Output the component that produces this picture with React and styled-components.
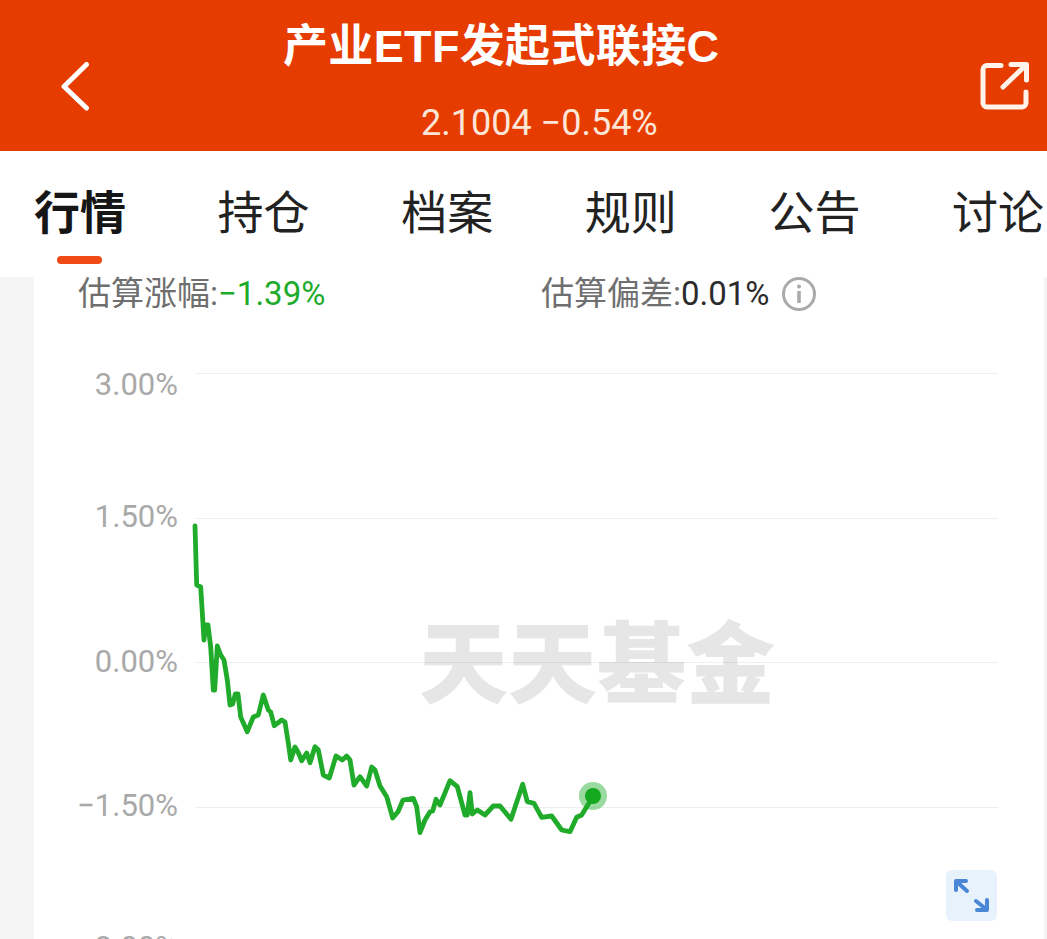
import React from "react";
import styled, { createGlobalStyle } from "styled-components";

const Global = createGlobalStyle`
  html, body { margin: 0; padding: 0; background: #f5f5f5; }
  body { font-family: Roboto, "Noto Sans CJK SC", sans-serif; }
  #root { width: 1047px; height: 939px; overflow: hidden; }
`;

const Page = styled.div`
  width: 1047px;
  height: 939px;
  overflow: hidden;
  display: flex;
  flex-direction: column;
`;

const Header = styled.header`
  height: 151px;
  flex: none;
  background: #e63c00;
  display: flex;
  align-items: flex-start;
  justify-content: space-between;
  padding: 62px 17px 0 60px;
  box-sizing: border-box;
  position: relative;
  color: #fff;
`;

const HeaderText = styled.div`
  position: absolute;
  inset: 0;
  display: flex;
  flex-direction: column;
`;

const Title = styled.h1`
  margin: 21px 0 0 283px;
  font: 700 45px/52px "Liberation Sans", "Noto Sans CJK SC", sans-serif;
  letter-spacing: 0.35px;
  white-space: nowrap;
`;

const Sub = styled.div`
  margin: 30px 0 0 421px;
  font: 400 36px/40px Roboto, "Noto Sans CJK SC", sans-serif;
  color: #fde6d8;
  white-space: nowrap;
`;

const Tabs = styled.nav`
  height: 126px;
  flex: none;
  background: #fff;
  position: relative;
  z-index: 2;
  display: flex;
  gap: 91.6px;
  padding: 31px 0 0 34px;
  box-sizing: border-box;
  overflow: hidden;
`;

const Tab = styled.div`
  position: relative;
  flex: none;
  font: ${(p) => (p.$active ? 700 : 400)} 46px/54px "Noto Sans CJK SC", sans-serif;
  color: ${(p) => (p.$active ? "#161616" : "#222")};
  white-space: nowrap;
`;

const Underline = styled.span`
  position: absolute;
  left: 23px;
  top: 74px;
  width: 45px;
  height: 8px;
  border-radius: 4px;
  background: #f04a16;
`;

const Body = styled.main`
  flex: 1;
  display: flex;
  padding: 0 3px 0 34px;
  min-height: 0;
`;

const Card = styled.section`
  flex: 1;
  background: #fff;
  position: relative;
  min-height: 0;
`;

const Stats = styled.div`
  display: grid;
  grid-template-columns: 463px auto;
  padding: 2px 0 0 44px;
  height: 32px;
  box-sizing: border-box;
  position: relative;
  z-index: 3;
`;

const Stat = styled.div`
  display: flex;
  align-items: center;
  height: 30px;
  font: 400 33px/30px Roboto, "Noto Sans CJK SC", sans-serif;
  color: #6f6f6f;
  white-space: nowrap;
`;

const StatValue = styled.span`
  color: ${(p) => p.$color};
`;

const InfoIcon = styled.svg`
  width: 36px;
  height: 36px;
  margin-left: 11px;
  flex: none;
`;

const Chart = styled.div`
  margin-top: 64px;
`;

const Row = styled.div`
  display: grid;
  grid-template-columns: 144px 803px;
  column-gap: 17px;
  height: 144.5px;
  align-items: start;
`;

const AxisLabel = styled.div`
  text-align: right;
  font: 400 31px/30px Roboto, sans-serif;
  color: #a9a9a9;
  margin-top: ${(p) => p.$top}px;
`;

const GridLine = styled.div`
  height: 1px;
  background: rgba(0, 0, 0, 0.065);
`;

const Watermark = styled.div`
  position: absolute;
  left: 385px;
  top: 331px;
  font: 900 89px/100px "Noto Sans CJK SC", sans-serif;
  color: #e6e6e6;
  white-space: nowrap;
  z-index: 0;
`;

const ChartRows = styled.div`
  position: relative;
  z-index: 1;
`;

const LineLayer = styled.svg`
  position: absolute;
  left: 0;
  top: 0;
  width: 1010px;
  height: 662px;
  z-index: 2;
`;

const ExpandButton = styled.button`
  position: absolute;
  left: 912px;
  top: 593px;
  width: 51px;
  height: 51px;
  padding: 0;
  border: 0;
  border-radius: 6px;
  background: #e8f2fd;
  display: flex;
  align-items: center;
  justify-content: center;
  z-index: 3;
`;

const points = [
  [195,526],[196.7,585],[200.7,587],[204,640],[205.3,625],[208,625],[210.7,647],[213.3,690],[214.7,690],
  [217.3,646],[220.7,655],[224,660],[227.3,680],[230,705],[232.7,704],[235.3,694],[238,694],[240.7,717],
  [247.3,731.7],[253.3,717],[258.3,715],[263.3,695],[268.3,710],[270.7,712],[274.3,725.7],[281.7,720],
  [285,722],[288.3,743],[290.7,760],[295,747],[298,752],[301.7,760.7],[306.7,753],[310,762.7],[315,746.7],
  [318.3,750],[323.3,775],[329.3,778],[336,756],[342.3,760],[346.7,756],[350,760],[354,785],[360,776.7],
  [366.7,786],[371.7,767],[375,770],[380,786],[386.7,796.7],[392.7,818],[398,811.7],[403,800],[413.3,798.3],
  [416.7,806.7],[420,832.7],[425,820],[430,811.7],[432.7,811],[436,799.3],[440,805],[450,780.7],[457.3,786.7],
  [465,815],[467.3,815],[470,792.7],[472.3,814],[477.3,810],[485,815],[493.3,806],[500,806],[511,819.3],
  [522.7,784.3],[527.3,801.7],[534,803.3],[541.7,817.3],[551.7,816],[561.7,830],[570,831.7],[576.7,817.3],
  [581.7,815],[593.3,796],
];

const labels = [
  { text: "3.00%", top: -3 },
  { text: "1.50%", top: -16 },
  { text: "0.00%", top: -15 },
  { text: "−1.50%", top: -16 },
  { text: "−3.00%", top: -18 },
];
const tabs = ["行情", "持仓", "档案", "规则", "公告", "讨论"];

export default function App() {
  return (
    <Page>
      <Global />
      <Header>
        <HeaderText>
          <Title>产业ETF发起式联接C</Title>
          <Sub>2.1004 −0.54%</Sub>
        </HeaderText>
        <svg width="32" height="50" viewBox="0 0 32 50" fill="none" stroke="#fff" strokeWidth="5" strokeLinecap="round" strokeLinejoin="round">
          <path d="M26.500 2.500 4 24.500 26.500 46" />
        </svg>
        <svg width="50" height="48" viewBox="0 0 50 48" fill="none" stroke="#fff3ea" strokeWidth="5" strokeLinecap="round" strokeLinejoin="round">
          <path d="M21 3.500H7a4 4 0 0 0-4 4V41a4 4 0 0 0 4 4h35a4 4 0 0 0 4-4V30" />
          <path d="M23 25 46 3M31 2.500h15.500V18" />
        </svg>
      </Header>
      <Tabs>
        {tabs.map((t, i) => (
          <Tab key={t} $active={i === 0}>
            {t}
            {i === 0 && <Underline />}
          </Tab>
        ))}
      </Tabs>
      <Body>
        <Card>
          <Stats>
            <Stat>
              估算涨幅:<StatValue $color="#20ab2b">−1.39%</StatValue>
            </Stat>
            <Stat>
              估算偏差:<StatValue $color="#2b2b2b">0.01%</StatValue>
              <InfoIcon viewBox="0 0 36 36" fill="none">
                <circle cx="18" cy="18" r="15.500" stroke="#aaa" strokeWidth="3" />
                <circle cx="18" cy="10.500" r="2" fill="#aaa" />
                <rect x="16.200" y="15" width="3.600" height="12" fill="#aaa" />
              </InfoIcon>
            </Stat>
          </Stats>
          <Watermark>天天基金</Watermark>
          <Chart>
            <ChartRows>
              {labels.map((l, i) => (
                <Row key={l.text}>
                  <AxisLabel $top={l.top}>{l.text}</AxisLabel>
                  {i < 4 && <GridLine />}
                </Row>
              ))}
            </ChartRows>
          </Chart>
          <LineLayer viewBox="34 277 1010 662" fill="none">
            <polyline
              points={points.map((p) => p.join(",")).join(" ")}
              stroke="#20ab2b"
              strokeWidth="4.800"
              strokeLinejoin="round"
              strokeLinecap="round"
            />
            <circle cx="593" cy="796" r="14" fill="#20ab2b" fillOpacity="0.45" />
            <circle cx="593" cy="796" r="8" fill="#14a81f" />
          </LineLayer>
          <ExpandButton aria-label="expand">
            <svg width="51" height="51" viewBox="0 0 51 51" fill="none" stroke="#4a86d6" strokeWidth="4" strokeLinecap="round" strokeLinejoin="round">
              <path d="M10 20V11h10M10.500 11.500 21 21" />
              <path d="M41 30v10H31M40.500 39.500 30 31" />
            </svg>
          </ExpandButton>
        </Card>
      </Body>
    </Page>
  );
}
